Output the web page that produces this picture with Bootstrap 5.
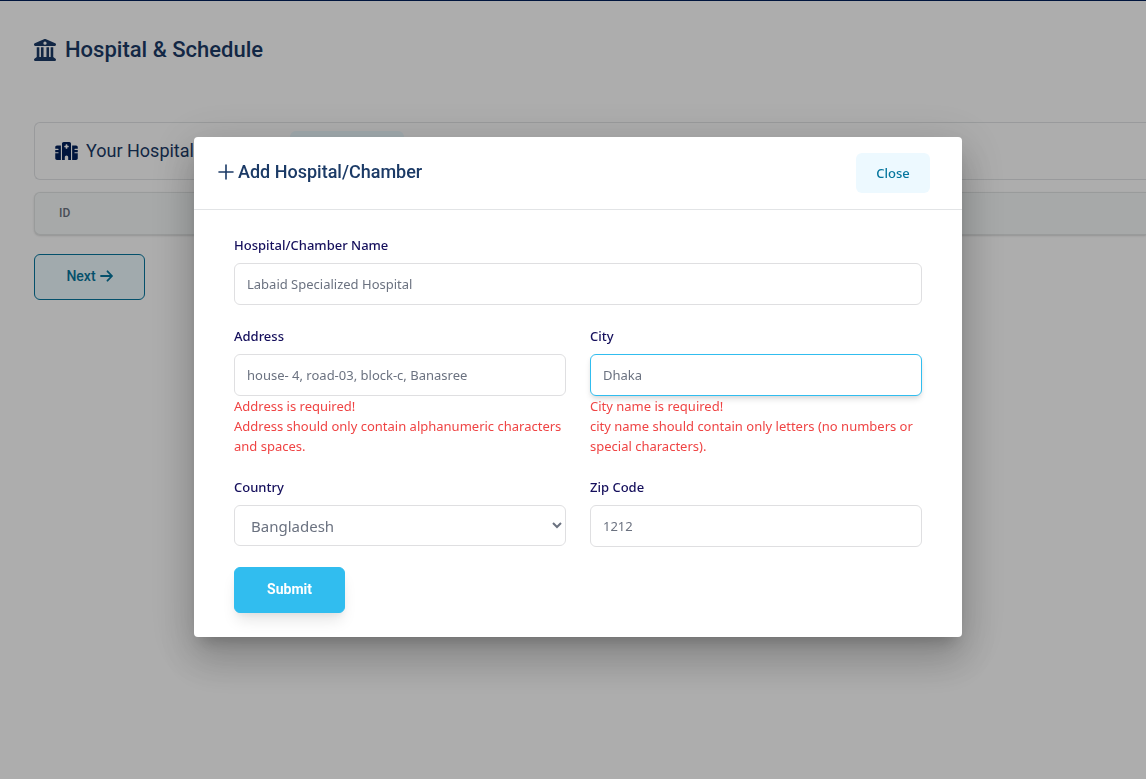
<!DOCTYPE html>
<html lang="en">
<head>
<meta charset="utf-8">
<meta name="viewport" content="width=device-width, initial-scale=1">
<title>Hospital &amp; Schedule</title>
<link href="https://cdn.jsdelivr.net/npm/bootstrap@5.3.0/dist/css/bootstrap.min.css" rel="stylesheet">
<style>
  body { font-family: "Noto Sans", "Open Sans", sans-serif; font-size: 14px; line-height: 20px; color: #1b3a66; overflow: hidden; }
  .topline { border-top: 1px solid #001f5c; }
  .page-main { padding: 32px 0 32px 34px; }
  .page-title, .panel-title, .dialog-title { font-family: Roboto, sans-serif; font-weight: 500; }
  .page-title { font-size: 22px; line-height: 34px; gap: 9px; margin-bottom: 55px; }
  .panel { height: 58px; padding: 0 20px; border: 1px solid #e2e4e6; border-right: 0; border-radius: 6px 0 0 6px; margin-bottom: 12px; }
  .panel-title { font-size: 18px; line-height: 28px; gap: 8px; font-weight: 400; }
  .panel-title svg { color: #00205b; }
  .panel-action { width: 114px; height: 40px; background: #ecfaff; border: 0; border-radius: 6px; margin-left: 96px; }
  .list-box { background: #f7fafa; border: 1px solid #e2e5e5; border-right: 0; border-radius: 6px 0 0 6px; box-shadow: 0 1px 2px rgba(0,0,0,.15); margin-bottom: 19px; }
  .list-box th { font: 500 12px/16px Roboto, sans-serif; color: #6b7280; padding: 12px 24px 13px; }
  .action-btn { font: 500 14px/20px Roboto, sans-serif; padding: 11px 32px 13px; border-radius: 6px; width: 111px; }
  .next-btn { color: #06769e; background: #edfbff; border: 1px solid #06769e; padding-left: 0; padding-right: 0; }
  .submit-btn { color: #fff; font-weight: 700; background: #31bdef; border: 1px solid #31bdef; box-shadow: 0 10px 15px -3px rgba(0,0,0,.1), 0 4px 6px -2px rgba(0,0,0,.05); }
  .scrim { background: rgba(0,0,0,.32); padding: 0 0 5px 10px; }
  .dialog-box { max-width: 768px; }
  .dialog-box .modal-content { border: 0; border-radius: 4px; color: inherit; box-shadow: 0 11px 15px -7px rgba(0,0,0,.2), 0 24px 38px 3px rgba(0,0,0,.14), 0 9px 46px 8px rgba(0,0,0,.12); }
  .dialog-box .modal-header { padding: 16px 32px 16px 24px; border-color: #e2e4e6; border-radius: 0; align-items: flex-start; }
  .dialog-title { font-size: 18px; line-height: 38px; gap: 4px; }
  .close-btn { font-size: 13px; line-height: 20px; font-weight: 500; color: #06769e; background: #edf9ff; border: 0; border-radius: 6px; padding: 10px 20px; width: 74px; }
  .dialog-box .modal-body { padding: 24px 40px; }
  .form-rows { --bs-gutter-y: 20px; }
  .field-label { display: block; font-size: 13px; line-height: 23px; font-weight: 500; color: #150f5c; margin-bottom: 6px; }
  .field-box { display: block; width: 100%; height: 42px; font-size: 13px; line-height: 20px; color: #6b7280; background: #fff; border: 1px solid #dfdfe1; border-radius: 6px; padding: 10px 12px; outline: 0; }
  .field-box::placeholder { color: #6b7280; opacity: 1; }
  .field-box.is-active { border-color: #31bdef; box-shadow: 0 4px 6px -1px rgba(0,0,0,.12), 0 2px 4px -1px rgba(0,0,0,.06); }
  select.field-box { font-size: 15px; height: 41px; padding: 0 12px; }
  .field-error { font-size: 13px; color: #ef4444; }
</style>
</head>
<body>
<div class="topline">
  <main class="page-main">
    <h1 class="page-title d-flex align-items-center">
      <svg width="22" height="22" viewBox="0 0 512 512" fill="currentColor" aria-hidden="true"><path fill-rule="evenodd" d="M244 2Q256-3 268 2L494 98Q512 106 512 126V134Q512 160 486 160H26Q0 160 0 134V126Q0 106 18 98ZM256 60a38 38 0 1 0 0 76a38 38 0 1 0 0-76Z"/><path d="M64 190H124V416H162V190H222V416H290V190H350V416H388V190H448V420L494 452Q512 464 512 484Q510 512 484 512H28Q2 512 0 484Q0 464 18 452L64 420Z"/></svg>
      <span>Hospital &amp; Schedule</span>
    </h1>
    <section class="panel d-flex align-items-center">
      <h2 class="panel-title d-flex align-items-center mb-0">
        <svg width="23" height="18" viewBox="0 0 640 512" fill="currentColor" aria-hidden="true"><path d="M192 48c0-26.500 21.500-48 48-48H400c26.500 0 48 21.500 48 48V512H368V432c0-26.500-21.500-48-48-48s-48 21.500-48 48v80H192V48zM48 96H160V512H48c-26.500 0-48-21.500-48-48V320H80c8.800 0 16-7.200 16-16s-7.200-16-16-16H0V224H80c8.800 0 16-7.200 16-16s-7.200-16-16-16H0V144c0-26.500 21.500-48 48-48zm544 0c26.500 0 48 21.500 48 48v48H560c-8.800 0-16 7.200-16 16s7.200 16 16 16h80v64H560c-8.800 0-16 7.200-16 16s7.200 16 16 16h80V464c0 26.500-21.500 48-48 48H480V96H592zM312 64c-8.800 0-16 7.200-16 16v24H272c-8.800 0-16 7.200-16 16v16c0 8.800 7.200 16 16 16h24v24c0 8.800 7.200 16 16 16h16c8.800 0 16-7.200 16-16V152h24c8.800 0 16-7.200 16-16V120c0-8.800-7.200-16-16-16H344V80c0-8.800-7.200-16-16-16H312z"/></svg>
        <span>Your Hospital</span>
      </h2>
      <button type="button" class="panel-action" aria-label="Add hospital"></button>
    </section>
    <div class="list-box">
      <table class="w-100"><thead><tr><th scope="col">ID</th></tr></thead></table>
    </div>
    <button type="button" class="action-btn next-btn d-inline-flex align-items-center justify-content-center gap-1">Next
      <svg width="13" height="12" viewBox="0 0 13 12" fill="none" stroke="currentColor" stroke-width="1.800" stroke-linecap="round" stroke-linejoin="round" aria-hidden="true"><path d="M1 6H12M7.500 1.300L12 6L7.500 10.700"/></svg>
    </button>
  </main>
</div>

<div class="modal d-block scrim" tabindex="-1" role="dialog" aria-modal="true" aria-labelledby="dialogTitle">
  <div class="modal-dialog modal-dialog-centered dialog-box">
    <div class="modal-content">
      <div class="modal-header">
        <h2 class="dialog-title d-flex align-items-center mb-0" id="dialogTitle">
          <svg width="16" height="16" viewBox="0 0 16 16" fill="none" stroke="currentColor" stroke-width="1.600" stroke-linecap="round" aria-hidden="true"><path d="M8 1V15M1 8H15"/></svg>
          <span>Add Hospital/Chamber</span>
        </h2>
        <button type="button" class="close-btn">Close</button>
      </div>
      <form class="modal-body" novalidate>
        <div class="row gx-4 form-rows">
          <div class="col-12">
            <label class="field-label" for="hospital">Hospital/Chamber Name</label>
            <input class="field-box" id="hospital" type="text" placeholder="Labaid Specialized Hospital">
          </div>
          <div class="col-6">
            <label class="field-label" for="address">Address</label>
            <input class="field-box" id="address" type="text" placeholder="house- 4, road-03, block-c, Banasree">
            <div class="field-error">Address is required!</div>
            <div class="field-error">Address should only contain alphanumeric characters and spaces.</div>
          </div>
          <div class="col-6">
            <label class="field-label" for="city">City</label>
            <input class="field-box is-active" id="city" type="text" placeholder="Dhaka">
            <div class="field-error">City name is required!</div>
            <div class="field-error">city name should contain only letters (no numbers or special characters).</div>
          </div>
          <div class="col-6">
            <label class="field-label" for="country">Country</label>
            <select class="field-box" id="country"><option>Bangladesh</option></select>
          </div>
          <div class="col-6">
            <label class="field-label" for="zip">Zip Code</label>
            <input class="field-box" id="zip" type="text" placeholder="1212">
          </div>
          <div class="col-12">
            <button type="submit" class="action-btn submit-btn">Submit</button>
          </div>
        </div>
      </form>
    </div>
  </div>
</div>
<script src="https://cdn.jsdelivr.net/npm/bootstrap@5.3.0/dist/js/bootstrap.bundle.min.js"></script>
</body>
</html>
